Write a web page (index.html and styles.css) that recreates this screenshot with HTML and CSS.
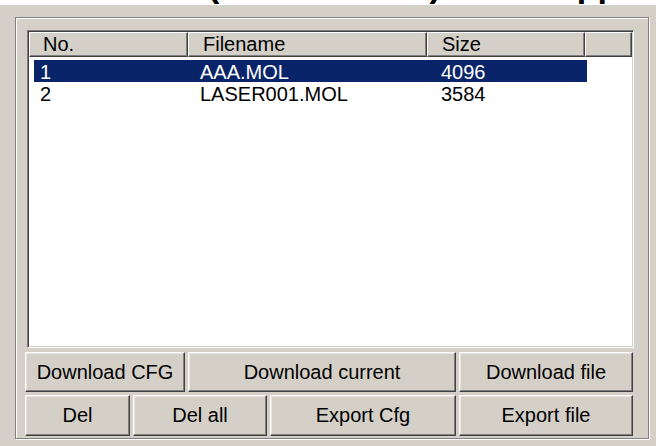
FILE: index.html
```html
<!DOCTYPE html>
<html lang="en">
<head>
<meta charset="utf-8">
<title>MOL file list</title>
<link rel="stylesheet" href="styles.css">
</head>
<body>
  <div class="caption">
    <h1 class="caption-text"><span class="cap-lead">Laser files</span><span class="cap-mid">(MOL file list)</span><span class="cap-tail">Mobile app</span></h1>
  </div>

  <div class="group">
    <div class="list">
      <div class="list-head">
        <div class="head-cell c-no">No.</div>
        <div class="head-cell c-name">Filename</div>
        <div class="head-cell c-size">Size</div>
        <div class="head-cell c-fill"></div>
      </div>
      <div class="list-body">
        <div class="list-row is-selected">
          <span class="r-no">1</span>
          <span class="r-name">AAA.MOL</span>
          <span class="r-size">4096</span>
        </div>
        <div class="list-row">
          <span class="r-no">2</span>
          <span class="r-name">LASER001.MOL</span>
          <span class="r-size">3584</span>
        </div>
      </div>
    </div>

    <div class="actions">
      <div class="btn-row row-a">
        <button class="btn">Download CFG</button>
        <button class="btn">Download current</button>
        <button class="btn">Download file</button>
      </div>
      <div class="btn-row row-b">
        <button class="btn">Del</button>
        <button class="btn">Del all</button>
        <button class="btn">Export Cfg</button>
        <button class="btn">Export file</button>
      </div>
    </div>
  </div>
</body>
</html>
```

FILE: styles.css
```css
html, body {
  margin: 0;
  padding: 0;
}

body {
  width: 656px;
  height: 446px;
  overflow: hidden;
  background: #d4d0c8;
  color: #000;
  font-family: "Liberation Sans", Arial, sans-serif;
  font-size: 20px;
}

/* page title strip above the dialog (only its lower edge is on screen) */
.caption {
  height: 5px;
  background: #fff;
  overflow: hidden;
}

.caption-text {
  display: flex;
  margin: -32px 0 0 0;
  font: bold 34px/34px "Liberation Sans", Arial, sans-serif;
  white-space: nowrap;
}

.cap-lead {
  flex: none;
  width: 208px;
  overflow: hidden;
}

.cap-mid {
  flex: none;
  word-spacing: 9px;
}

/* etched group frame */
.group {
  box-sizing: border-box;
  width: 634px;
  height: 422px;
  margin: 12px 0 0 15px;
  padding: 12px 15px 0 9px;
  border: 1px solid #808080;
  box-shadow: inset 1px 1px 0 #fff, 1px 1px 0 #fff;
}

/* sunken list view */
.list {
  box-sizing: border-box;
  width: 607px;
  height: 318px;
  margin-left: 2px;
  padding: 1px;
  background: #fff;
  border: 1px solid;
  border-color: #808080 #fff #fff #808080;
  box-shadow: inset 1px 1px 0 #404040, inset -1px -1px 0 #d4d0c8;
}

.list-head {
  display: grid;
  grid-template-columns: 159px 239px 158px 1fr;
  height: 25px;
}

.head-cell {
  box-sizing: border-box;
  background: #d4d0c8;
  border-top: 1px solid #fff;
  border-left: 1px solid #fff;
  border-right: 1px solid #404040;
  border-bottom: 1px solid #404040;
  box-shadow: inset -1px -1px 0 #808080;
  line-height: 23px;
  white-space: nowrap;
}

.c-no { padding-left: 13px; }
.c-name { padding-left: 14px; }
.c-size { padding-left: 14px; }

.list-body {
  margin-top: 3px;
}

.list-row {
  display: grid;
  grid-template-columns: 154px 239px 160px;
  width: 553px;
  height: 22px;
  margin-left: 5px;
  line-height: 24px;
  white-space: nowrap;
}

.list-row.is-selected {
  background: #0a246a;
  color: #fff;
}

.r-no { padding-left: 6px; }
.r-name { padding-left: 12px; }
.r-size { padding-left: 14px; }

/* push buttons */
.actions {
  display: grid;
  row-gap: 3px;
  margin-top: 4px;
}

.btn-row {
  display: grid;
  column-gap: 3px;
}

.row-a {
  grid-template-columns: 160px 268px 174px;
  height: 40px;
}

.row-b {
  grid-template-columns: 105px 134px 186px 174px;
  height: 41px;
}

.btn {
  margin: 0;
  padding: 0;
  font: inherit;
  color: #000;
  background: #d4d0c8;
  border: 1px solid;
  border-color: #fff #404040 #404040 #fff;
  box-shadow: inset -1px -1px 0 #808080, inset 1px 1px 0 #e6e3de;
  border-radius: 0;
  white-space: nowrap;
}
```
